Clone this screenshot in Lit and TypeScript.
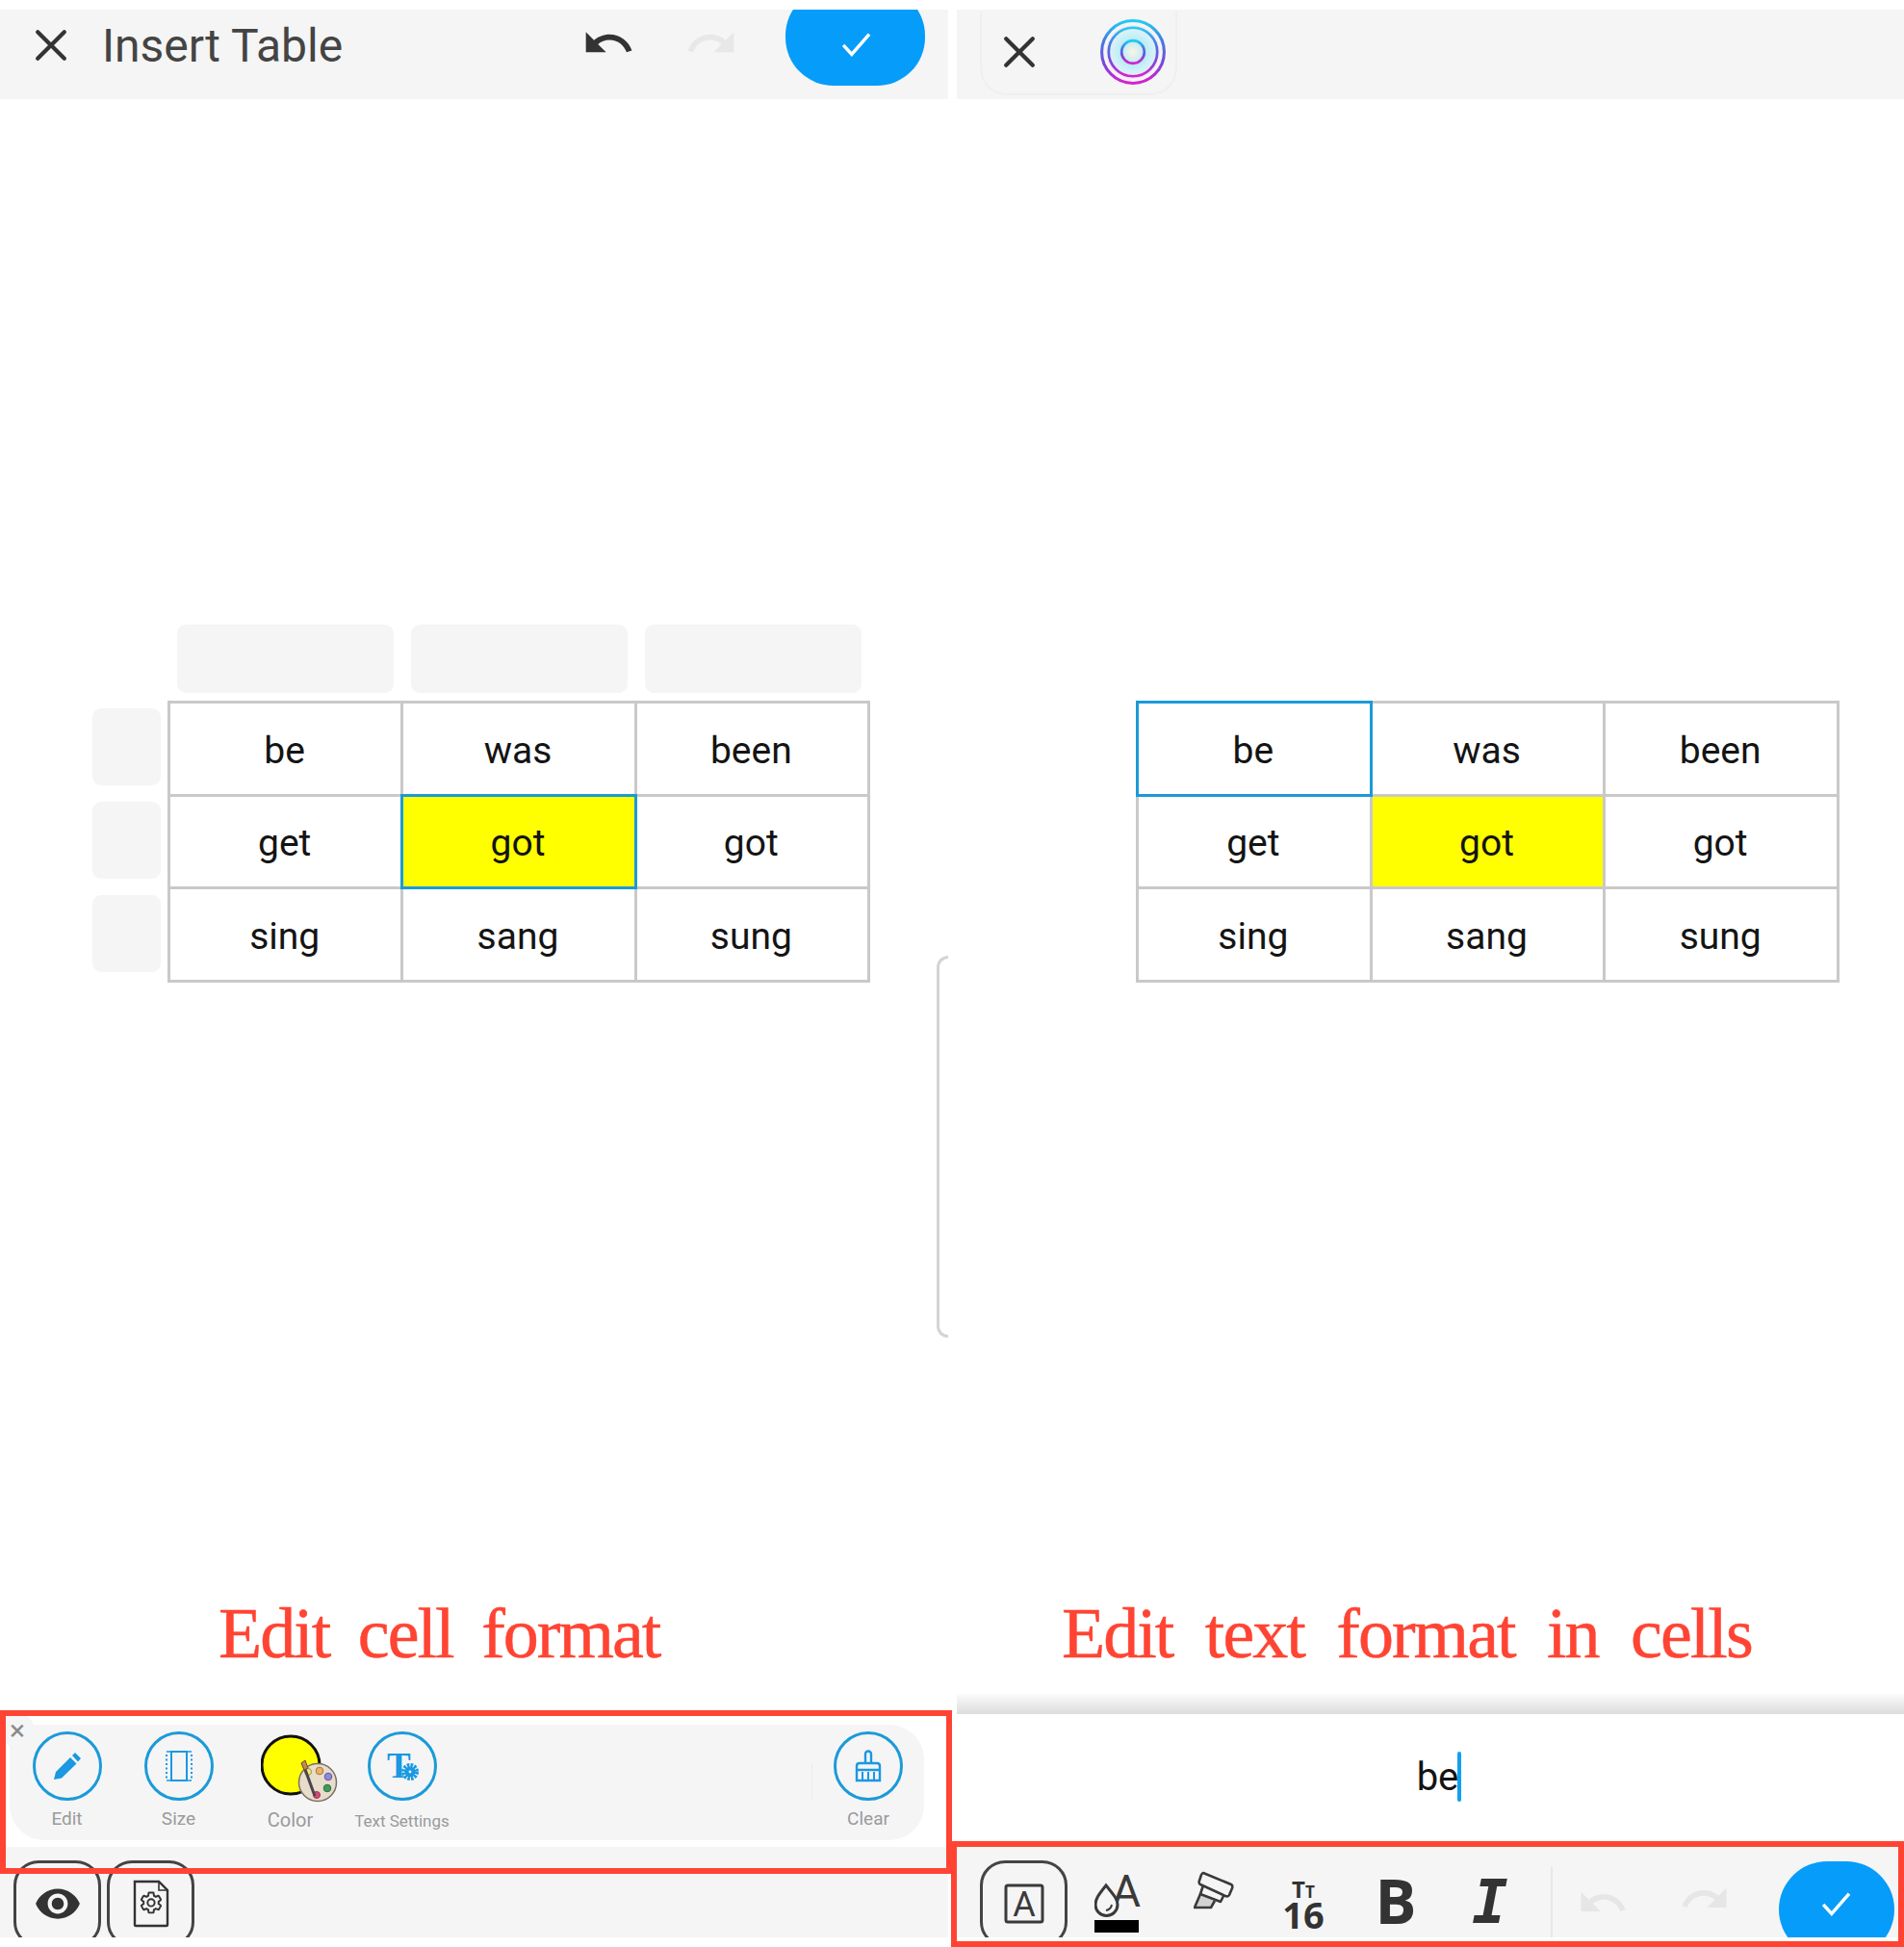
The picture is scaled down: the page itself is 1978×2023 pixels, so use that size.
import { LitElement, css, html, svg } from 'lit';
import { customElement } from 'lit/decorators.js';
import { classMap } from 'lit/directives/class-map.js';

const ROWS = [
   [ 'be', 'was', 'been' ],
   [ 'get', 'got', 'got' ],
   [ 'sing', 'sang', 'sung' ]
];

const closeIcon = html`<svg class="close" viewBox="0 0 32 32"><path d="M3 3 29 29M29 3 3 29" fill="none" stroke="#333" stroke-width="4" stroke-linecap="round"/></svg>`;

const undoPath = svg`<path d="M12.5 8c-2.65 0-5.05.99-6.9 2.6L2 7v9h9l-3.62-3.62c1.39-1.16 3.16-1.88 5.12-1.88 3.54 0 6.55 2.31 7.6 5.5l2.37-.78C21.08 11.03 17.15 8 12.5 8z"/>`;

const undoIcon = ( color: string, size: number ) => html`
   <svg style="width:${ size }px;height:${ size }px" viewBox="0 0 24 24" fill=${ color }>${ undoPath }</svg>`;
const redoIcon = ( color: string, size: number ) => html`
   <svg style="width:${ size }px;height:${ size }px;transform:scaleX(-1)" viewBox="0 0 24 24" fill=${ color }>${ undoPath }</svg>`;

const checkIcon = html`<svg class="check-icon" viewBox="0 0 36 30"><path d="M2 16 12 27 33 3" fill="none" stroke="#fff" stroke-width="4"/></svg>`;

const ringIcon = html`
   <svg class="ring" viewBox="0 0 68 68">
      <defs>
         <linearGradient id="rg" x1="0" y1="0" x2="0" y2="1">
            <stop offset="0" stop-color="#22cdf2"/>
            <stop offset=".3" stop-color="#3f7fe8"/>
            <stop offset=".7" stop-color="#7d45d8"/>
            <stop offset="1" stop-color="#d920cf"/>
         </linearGradient>
         <radialGradient id="rh">
            <stop offset="0" stop-color="#fdf4e6"/>
            <stop offset=".45" stop-color="#b8ecf6"/>
            <stop offset=".75" stop-color="#d2f2f8"/>
            <stop offset="1" stop-color="#f4e4f6"/>
         </radialGradient>
      </defs>
      <circle cx="34" cy="34" r="27" fill="url(#rh)"/>
      <circle cx="34" cy="34" r="31.5" fill="none" stroke="url(#rg)" stroke-width="3"/>
      <circle cx="34" cy="34" r="24.5" fill="none" stroke="url(#rg)" stroke-width="2.6"/>
      <circle cx="34" cy="34" r="11.5" fill="none" stroke="url(#rg)" stroke-width="2.6"/>
   </svg>`;

const pencilIcon = html`<svg class="tool" viewBox="0 0 30 30"><path d="M1 29 3 21 18 6 24.500 12.500 9 27.500ZM20 4 23 1 29 7 26 10.500Z" fill="#1a98e2"/></svg>`;

const sizeIcon = html`
   <svg class="tool" viewBox="0 0 30 34" fill="none" stroke="#1a98e2">
      <rect x="7" y="2" width="16" height="30" stroke-width="2"/>
      <path d="M2 2H7M2 32H7M23 2H28M23 32H28" stroke-width="1.600"/>
      <path d="M2 5V30M28 5V30" stroke-width="2" stroke-dasharray="2 2.500"/>
   </svg>`;

const textSettingsIcon = html`
   <svg class="tool wide" viewBox="0 0 36 30">
      <text x="2" y="27" font-family="Liberation Serif" font-weight="700" font-size="37" fill="#1a98e2">T</text>
      <circle cx="26" cy="21" r="7" fill="none" stroke="#1a98e2" stroke-width="4" stroke-dasharray="2.500 1.200"/>
      <circle cx="26" cy="21" r="5.500" fill="#1a98e2"/>
      <circle cx="26" cy="21" r="1.400" fill="#f5f5f5"/>
   </svg>`;

const broomIcon = html`
   <svg class="tool" viewBox="0 0 30 34" fill="none" stroke="#1a98e2" stroke-width="2.400">
      <path d="M12 14V4.500a3 3 0 0 1 6 0V14"/>
      <path d="M6 14H24Q27 14 27 17V32H3V17Q3 14 6 14ZM3 21H27"/>
      <path d="M9 23V32M15 23V32M21 23V32" stroke-width="2"/>
   </svg>`;

const colorSwatch = html`
   <svg class="swatch" viewBox="0 0 84 72">
      <circle cx="31" cy="32" r="30" fill="#ff0" stroke="#111" stroke-width="3"/>
      <circle cx="59" cy="50" r="19.500" fill="#e8dccb" stroke="#7a6f66" stroke-width="1.500"/>
      <circle cx="49" cy="39" r="3.500" fill="#f7ec6a" stroke="#a09050"/>
      <circle cx="61" cy="38" r="3.800" fill="#f0b060" stroke="#a07840"/>
      <circle cx="70" cy="44" r="3.800" fill="#8f86e0" stroke="#6058a0"/>
      <circle cx="69" cy="56" r="3.800" fill="#3f9a5c" stroke="#2f7044"/>
      <circle cx="58" cy="63" r="3.500" fill="#d84878" stroke="#983050"/>
      <path d="M44 31 56 64" stroke="#4a4450" stroke-width="3"/>
      <path d="M42 30 46 27 49 35 45 37Z" fill="#c08a50" stroke="#6a5030"/>
   </svg>`;

const eyeIcon = html`<svg class="eye" viewBox="0 0 24 24"><path fill="#333" d="M12 4.500C7 4.500 2.730 7.610 1 12c1.730 4.390 6 7.500 11 7.500s9.270-3.110 11-7.500c-1.730-4.390-6-7.500-11-7.500zM12 17c-2.760 0-5-2.240-5-5s2.240-5 5-5 5 2.240 5 5-2.240 5-5 5zm0-8c-1.660 0-3 1.340-3 3s1.340 3 3 3 3-1.340 3-3-1.340-3-3-3z"/></svg>`;

const gearDocIcon = html`
   <svg class="gear-doc" viewBox="0 0 38 50" fill="none" stroke="#333">
      <path d="M2 2H27L36 11V47a1 1 0 0 1-1 1H3a1 1 0 0 1-1-1Z" stroke-width="2.400"/>
      <path d="M27 2V11H36" stroke-width="1.600"/>
      <g transform="translate(6.500 11.500) scale(1.040)" stroke-width="1.900">
         <path d="M19.430 12.980c.04-.32.070-.64.070-.98s-.03-.66-.07-.98l2.110-1.650c.19-.15.240-.42.120-.64l-2-3.460c-.12-.22-.39-.3-.61-.22l-2.490 1c-.52-.4-1.080-.73-1.690-.98l-.38-2.650C14.460 2.180 14.250 2 14 2h-4c-.25 0-.46.180-.49.420l-.38 2.650c-.61.25-1.170.59-1.690.98l-2.490-1c-.23-.09-.49 0-.61.220l-2 3.460c-.13.220-.07.490.12.640l2.110 1.650c-.04.320-.07.650-.07.980s.03.660.07.980l-2.110 1.650c-.19.150-.24.420-.12.640l2 3.460c.12.220.39.300.61.220l2.490-1c.52.400 1.080.730 1.690.980l.38 2.650c.03.240.24.420.49.420h4c.25 0 .46-.18.49-.42l.38-2.650c.61-.25 1.170-.59 1.690-.98l2.490 1c.23.090.49 0 .61-.22l2-3.460c.12-.22.070-.49-.12-.64l-2.110-1.650z"/>
         <circle cx="12" cy="12" r="3.500"/>
      </g>
   </svg>`;

const boxedAIcon = html`
   <svg class="boxed-a" viewBox="0 0 42 42">
      <rect x="2" y="2" width="38" height="38" rx="2" fill="none" stroke="#3a3a3a" stroke-width="3"/>
      <text x="21" y="34" text-anchor="middle" font-family="Roboto" font-size="36" fill="#3a3a3a">A</text>
   </svg>`;

const textColorIcon = html`
   <svg class="text-color" viewBox="0 0 52 64">
      <text x="33" y="36" text-anchor="middle" font-family="Roboto" font-size="46" fill="#3a3a3a">A</text>
      <path d="M12 14C4 24 1 28 1 34a11.500 11.500 0 0 0 23 0C24 28 20 24 12 14Z" fill="#f5f5f5" stroke="#3a3a3a" stroke-width="3"/>
      <path d="M18 34Q17 39 12 40" fill="none" stroke="#3a3a3a" stroke-width="2"/>
      <rect x="0" y="50" width="46" height="13" fill="#000"/>
   </svg>`;

const highlighterIcon = html`
   <svg class="highlighter" viewBox="0 0 42 42" fill="none" stroke="#3a3a3a" stroke-width="2.600" stroke-linejoin="round">
      <path d="M10 2 39 14Q41 15 40 18L37 25Q36 27 33 26L7 14Q5 13 6 10L8 4Q9 2 10 2Z"/>
      <path d="M10 15 7 24 28 32 31 26"/>
      <path d="M7 24 1 38 18 38 22 31" fill="#3a3a3a" fill-opacity=".18"/>
   </svg>`;

const SIZE_COLS = [ 0, 1, 2 ];

@customElement( 'app-root' )
export class AppRoot extends LitElement {

   renderSheet( selRow: number, selCol: number ) {
      return html`
      <div class="grid-table">
         ${ ROWS.map( ( row, r ) => row.map( ( text, c ) => html`
            <div class=${ classMap( {
               cell: true,
               yellow: r === 1 && c === 1,
               sel: r === selRow && c === selCol
            } ) }>${ text }</div>
         ` ) ) }
      </div>`;
   }

   renderItem( label: string, icon: unknown, extra = '' ) {
      return html`
      <div class="item ${ extra }">
         <div class="circle">${ icon }</div>
         <span class="item-label">${ label }</span>
      </div>`;
   }

   render() {
      return html`
      <section class="panel">
         <header class="top">
            ${ closeIcon }
            <span class="title">Insert Table</span>
            <span class="hist first">${ undoIcon( '#333', 56 ) }</span>
            <span class="hist">${ redoIcon( '#e8e8e8', 56 ) }</span>
            <span class="done">${ checkIcon }</span>
         </header>

         <div class="sheet">
            <div></div>
            <div class="col-handles">
               ${ SIZE_COLS.map( () => html`<i></i>` ) }
            </div>
            <div class="row-handles">
               ${ SIZE_COLS.map( () => html`<i></i>` ) }
            </div>
            ${ this.renderSheet( 1, 1 ) }
         </div>

         <div class="spring"></div>
         <div class="caption left">Edit cell format</div>

         <div class="card">
            ${ this.renderItem( 'Edit', pencilIcon ) }
            ${ this.renderItem( 'Size', sizeIcon ) }
            <div class="item">
               ${ colorSwatch }
               <span class="item-label low">Color</span>
            </div>
            ${ this.renderItem( 'Text Settings', textSettingsIcon, 'small' ) }
            <b class="card-rule"></b>
            ${ this.renderItem( 'Clear', broomIcon ) }
            <span class="dismiss">×</span>
         </div>

         <footer class="bar left-bar">
            <span class="key">${ eyeIcon }</span>
            <span class="key">${ gearDocIcon }</span>
         </footer>

         <div class="side-handle"></div>
         <div class="mark mark-left"></div>
      </section>

      <section class="panel">
         <header class="top">
            <div class="mode-box">
               ${ closeIcon }
               ${ ringIcon }
            </div>
         </header>

         <div class="sheet plain">
            ${ this.renderSheet( 0, 0 ) }
         </div>

         <div class="spring"></div>
         <div class="caption right">Edit text format in cells</div>

         <div class="shade"></div>
         <div class="input"><span>be</span><i class="caret"></i></div>

         <footer class="bar text-bar">
            <span class="key">${ boxedAIcon }</span>
            <span class="slot">${ textColorIcon }</span>
            <span class="slot">${ highlighterIcon }</span>
            <span class="slot size-slot"><small>T<em>T</em></small><strong>16</strong></span>
            <span class="slot bold">B</span>
            <span class="slot italic">I</span>
            <span class="slot ruled">${ undoIcon( '#e6e6e6', 54 ) }</span>
            <span class="slot">${ redoIcon( '#e6e6e6', 54 ) }</span>
            <span class="done low">${ checkIcon }</span>
         </footer>

         <div class="mark mark-right"></div>
      </section>
      `;
   }

   static styles = css`
  :host {
    display: grid;
    grid-template-columns: 985px 984px;
    column-gap: 9px;
    width: 1978px;
    height: 2023px;
    background: #fff;
    overflow: hidden;
    font-family: Roboto, sans-serif;
  }
  .panel {
    position: relative;
    display: flex;
    flex-direction: column;
    height: 2023px;
    padding: 10px 0;
    box-sizing: border-box;
  }
  .top {
    display: flex;
    align-items: center;
    flex: none;
    height: 93px;
    padding-left: 36px;
    background: #f5f5f5;
    overflow: hidden;
  }
  .close {
    flex: none;
    width: 34px;
    height: 34px;
    margin-bottom: 20px;
  }
  .title {
    margin: 0 0 18px 36px;
    font-size: 48px;
    color: #444;
    white-space: nowrap;
  }
  .hist {
    display: flex;
    justify-content: center;
    width: 60px;
    margin-bottom: 24px;
    margin-left: 47px;
  }
  .hist.first {
    margin-left: auto;
  }
  .done {
    display: flex;
    align-items: center;
    justify-content: center;
    flex: none;
    align-self: flex-start;
    width: 145px;
    height: 102px;
    margin: -23px 24px 0 47px;
    border-radius: 50px;
    background: #069cfa;
  }
  .check-icon {
    width: 32px;
    height: 26px;
    margin: 15px 0 0 3px;
  }
  .mode-box {
    display: flex;
    align-items: center;
    gap: 66px;
    box-sizing: border-box;
    width: 205px;
    height: 87px;
    margin: -3px 0 0 -12px;
    padding-left: 22px;
    border: 2px solid #efefef;
    border-top: none;
    border-radius: 0 0 28px 28px;
  }
  .mode-box .close {
    margin: 0;
  }
  .ring {
    width: 70px;
    height: 70px;
    flex: none;
    filter: blur(.5px);
  }

  .sheet {
    display: grid;
    grid-template-columns: 71px 730px;
    column-gap: 7px;
    row-gap: 8px;
    margin: 546px 0 0 96px;
  }
  .sheet.plain {
    display: block;
    margin: 625px 0 0 186px;
  }
  .col-handles {
    display: flex;
    gap: 18px;
    padding-left: 10px;
  }
  .col-handles i {
    width: 225px;
    height: 71px;
    border-radius: 9px;
    background: #f5f5f5;
  }
  .row-handles {
    display: flex;
    flex-direction: column;
    gap: 17px;
    padding-top: 8px;
  }
  .row-handles i {
    width: 71px;
    height: 80px;
    border-radius: 9px;
    background: #f5f5f5;
  }
  .grid-table {
    display: grid;
    grid-template-columns: repeat(3, 1fr);
    grid-template-rows: repeat(3, 96.67px);
    width: 730px;
    border-top: 3px solid #c9c9c9;
    border-left: 3px solid #c9c9c9;
    box-sizing: border-box;
  }
  .plain .grid-table {
    width: 731px;
  }
  .cell {
    position: relative;
    display: flex;
    align-items: center;
    justify-content: center;
    padding: 4px 2px 0 0;
    box-sizing: border-box;
    border-right: 3px solid #c9c9c9;
    border-bottom: 3px solid #c9c9c9;
    font-size: 39px;
    color: #141414;
  }
  .yellow {
    background: #ff0;
  }
  .sel::after {
    content: "";
    position: absolute;
    inset: -3px -3px -3px -3px;
    border: 3px solid #1b9ad8;
  }

  .spring {
    flex: 1;
  }
  .caption {
    flex: none;
    height: 100px;
    margin-bottom: 10px;
    font-family: "Liberation Serif", serif;
    font-size: 74px;
    line-height: 95px;
    letter-spacing: -2px;
    color: #ff4433;
    -webkit-text-stroke: .5px #ff4433;
    white-space: nowrap;
  }
  .caption.left {
    padding-left: 227px;
    word-spacing: 13px;
  }
  .caption.right {
    padding-left: 109px;
    word-spacing: 17px;
  }

  .card {
    position: relative;
    display: flex;
    flex: none;
    box-sizing: border-box;
    width: 950px;
    height: 120px;
    margin: 32px 0 7px 10px;
    padding: 7px 0 0 1.500px;
    border-radius: 0 36px 36px 36px;
    background: #f5f5f6;
  }
  .item {
    display: flex;
    flex-direction: column;
    align-items: center;
    flex: none;
    width: 116px;
  }
  .circle {
    display: flex;
    align-items: center;
    justify-content: center;
    box-sizing: border-box;
    width: 72px;
    height: 72px;
    border: 3px solid #1b9ad8;
    border-radius: 50%;
  }
  .item-label {
    margin-top: 8px;
    font-size: 19px;
    line-height: 22px;
    color: #9a9a9a;
    white-space: nowrap;
  }
  .item-label.low {
    margin-top: 6px;
    font-size: 20px;
  }
  .small .item-label {
    font-size: 17px;
    margin-top: 10px;
  }
  .tool {
    width: 30px;
    height: 34px;
  }
  .tool.wide {
    width: 36px;
    height: 30px;
    overflow: visible;
  }
  .swatch {
    flex: none;
    width: 84px;
    height: 72px;
    margin: 3px 0 0 22px;
  }
  .card-rule {
    width: 1px;
    height: 37px;
    margin: 34px 0 0 auto;
    background: #ececec;
  }
  .dismiss {
    position: absolute;
    left: -10px;
    top: -12px;
    width: 36px;
    height: 36px;
    border-radius: 50%;
    background: #f5f5f5;
    font-size: 30px;
    line-height: 36px;
    text-align: center;
    color: #8a8a8a;
  }

  .bar {
    flex: none;
    height: 94px;
    background: #f5f5f5;
    overflow: hidden;
  }
  .left-bar {
    display: flex;
    gap: 6px;
    padding: 14px 0 0 14px;
    box-sizing: border-box;
  }
  .key {
    display: flex;
    align-items: center;
    justify-content: center;
    flex: none;
    box-sizing: border-box;
    width: 91px;
    height: 90px;
    border: 3px solid #444;
    border-radius: 26px;
    align-self: flex-start;
  }
  .eye {
    width: 50px;
    height: 50px;
  }
  .gear-doc {
    width: 38px;
    height: 50px;
  }
  .boxed-a {
    width: 42px;
    height: 42px;
  }
  .text-bar {
    display: grid;
    grid-template-columns: 91px 102px 100px 86px 106px 90px 124px 108px 1fr;
    grid-template-rows: 80px;
    align-items: center;
    justify-items: center;
    padding: 14px 0 0 24px;
    box-sizing: border-box;
  }
  .slot {
    display: flex;
    flex-direction: column;
    align-items: center;
    justify-content: center;
    font-family: "Open Sans", sans-serif;
    color: #333;
  }
  .text-color {
    width: 52px;
    height: 64px;
    margin: 8px 0 0 6px;
  }
  .highlighter {
    width: 42px;
    height: 42px;
    margin-bottom: 16px;
  }
  .size-slot {
    margin-top: 12px;
  }
  .size-slot small {
    font-size: 24px;
    line-height: 16px;
    font-weight: 700;
  }
  .size-slot em {
    font-style: normal;
    font-size: 17px;
  }
  .size-slot strong {
    font-size: 38px;
    line-height: 30px;
    font-weight: 700;
  }
  .bold {
    margin-top: 4px;
    font-size: 64px;
    font-weight: 700;
    line-height: 64px;
  }
  .italic {
    margin-top: 8px;
    font-family: "DejaVu Sans Mono", monospace;
    font-size: 62px;
    font-weight: 700;
    font-style: italic;
    line-height: 62px;
  }
  .ruled {
    align-self: stretch;
    justify-self: stretch;
    margin: 7px 0 0 18px;
    border-left: 2px solid #e8e8e8;
  }
  .done.low {
    align-self: start;
    justify-self: start;
    width: 120px;
    height: 100px;
    margin: 1px 0 0 23px;
  }
  .done.low .check-icon {
    margin: -12px 0 0 0;
  }

  .shade {
    flex: none;
    height: 21px;
    background: linear-gradient(#fbfbfb, #dcdcdc);
  }
  .input {
    display: flex;
    align-items: center;
    justify-content: center;
    flex: none;
    height: 138px;
    padding: 0 0 8px 18px;
    box-sizing: border-box;
    font-size: 40px;
    color: #141414;
  }
  .caret {
    width: 4px;
    height: 52px;
    margin-left: -1px;
    border-radius: 2px;
    background: #12a0ee;
  }

  .side-handle {
    position: absolute;
    left: 973px;
    top: 993px;
    width: 12px;
    height: 397px;
    box-sizing: border-box;
    border: 3px solid #d4d4d4;
    border-right: none;
    border-radius: 20px 0 0 20px;
  }
  .mark {
    position: absolute;
    box-sizing: border-box;
    border: 6px solid #ff4433;
    pointer-events: none;
  }
  .mark-left {
    left: 0;
    top: 1777px;
    width: 989px;
    height: 170px;
  }
  .mark-right {
    left: -6px;
    top: 1913px;
    width: 990px;
    height: 110px;
  }
  `;
}


declare global {
   interface HTMLElementTagNameMap {
      'app-root': AppRoot;
   }
};
